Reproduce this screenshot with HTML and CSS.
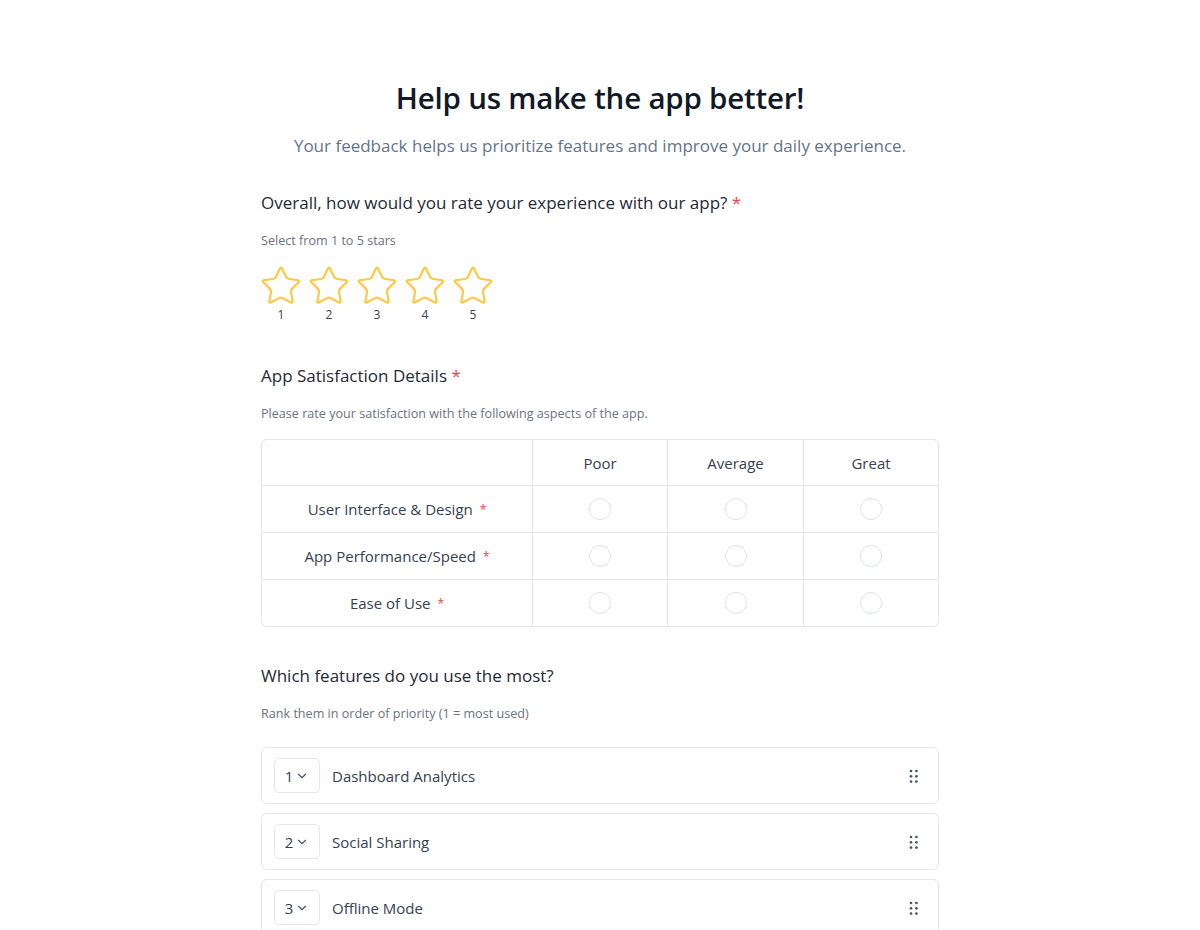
FILE: index.html
```html
<!DOCTYPE html>
<html lang="en">
<head>
<meta charset="utf-8">
<title>Feedback</title>
<link rel="stylesheet" href="styles.css">
</head>
<body>
<main class="form">
  <h1 class="title">Help us make the app better!</h1>
  <p class="subtitle">Your feedback helps us prioritize features and improve your daily experience.</p>

  <section class="question q-rating">
    <h2 class="q-title">Overall, how would you rate your experience with our app? <span class="req">*</span></h2>
    <p class="q-help">Select from 1 to 5 stars</p>
    <div class="stars">
      <div class="star"><svg viewBox="0 0 24 24" class="star-icon"><path d="M11.5 2.3a.53.53 0 0 1 .95 0l2.31 4.68a2.12 2.12 0 0 0 1.6 1.16l5.16.75a.53.53 0 0 1 .3.9l-3.74 3.64a2.12 2.12 0 0 0-.61 1.88l.88 5.14a.53.53 0 0 1-.77.56l-4.62-2.43a2.12 2.12 0 0 0-1.97 0L6.4 21.01a.53.53 0 0 1-.77-.56l.88-5.14a2.12 2.12 0 0 0-.61-1.88L2.16 9.8a.53.53 0 0 1 .29-.9l5.17-.76a2.12 2.12 0 0 0 1.6-1.16z"/></svg><span class="star-num">1</span></div>
      <div class="star"><svg viewBox="0 0 24 24" class="star-icon"><path d="M11.5 2.3a.53.53 0 0 1 .95 0l2.31 4.68a2.12 2.12 0 0 0 1.6 1.16l5.16.75a.53.53 0 0 1 .3.9l-3.74 3.64a2.12 2.12 0 0 0-.61 1.88l.88 5.14a.53.53 0 0 1-.77.56l-4.62-2.43a2.12 2.12 0 0 0-1.97 0L6.4 21.01a.53.53 0 0 1-.77-.56l.88-5.14a2.12 2.12 0 0 0-.61-1.88L2.16 9.8a.53.53 0 0 1 .29-.9l5.17-.76a2.12 2.12 0 0 0 1.6-1.16z"/></svg><span class="star-num">2</span></div>
      <div class="star"><svg viewBox="0 0 24 24" class="star-icon"><path d="M11.5 2.3a.53.53 0 0 1 .95 0l2.31 4.68a2.12 2.12 0 0 0 1.6 1.16l5.16.75a.53.53 0 0 1 .3.9l-3.74 3.64a2.12 2.12 0 0 0-.61 1.88l.88 5.14a.53.53 0 0 1-.77.56l-4.62-2.43a2.12 2.12 0 0 0-1.97 0L6.4 21.01a.53.53 0 0 1-.77-.56l.88-5.14a2.12 2.12 0 0 0-.61-1.88L2.16 9.8a.53.53 0 0 1 .29-.9l5.17-.76a2.12 2.12 0 0 0 1.6-1.16z"/></svg><span class="star-num">3</span></div>
      <div class="star"><svg viewBox="0 0 24 24" class="star-icon"><path d="M11.5 2.3a.53.53 0 0 1 .95 0l2.31 4.68a2.12 2.12 0 0 0 1.6 1.16l5.16.75a.53.53 0 0 1 .3.9l-3.74 3.64a2.12 2.12 0 0 0-.61 1.88l.88 5.14a.53.53 0 0 1-.77.56l-4.62-2.43a2.12 2.12 0 0 0-1.97 0L6.4 21.01a.53.53 0 0 1-.77-.56l.88-5.14a2.12 2.12 0 0 0-.61-1.88L2.16 9.8a.53.53 0 0 1 .29-.9l5.17-.76a2.12 2.12 0 0 0 1.6-1.16z"/></svg><span class="star-num">4</span></div>
      <div class="star"><svg viewBox="0 0 24 24" class="star-icon"><path d="M11.5 2.3a.53.53 0 0 1 .95 0l2.31 4.68a2.12 2.12 0 0 0 1.6 1.16l5.16.75a.53.53 0 0 1 .3.9l-3.74 3.64a2.12 2.12 0 0 0-.61 1.88l.88 5.14a.53.53 0 0 1-.77.56l-4.62-2.43a2.12 2.12 0 0 0-1.97 0L6.4 21.01a.53.53 0 0 1-.77-.56l.88-5.14a2.12 2.12 0 0 0-.61-1.88L2.16 9.8a.53.53 0 0 1 .29-.9l5.17-.76a2.12 2.12 0 0 0 1.6-1.16z"/></svg><span class="star-num">5</span></div>
    </div>
  </section>

  <section class="question q-matrix">
    <h2 class="q-title">App Satisfaction Details <span class="req">*</span></h2>
    <p class="q-help">Please rate your satisfaction with the following aspects of the app.</p>
    <div class="matrix">
      <div class="m-row m-head">
        <div class="m-cell m-label"></div>
        <div class="m-cell">Poor</div>
        <div class="m-cell">Average</div>
        <div class="m-cell">Great</div>
      </div>
      <div class="m-row">
        <div class="m-cell m-label">User Interface &amp; Design<span class="req req-sm">*</span></div>
        <div class="m-cell"><span class="radio"></span></div>
        <div class="m-cell"><span class="radio"></span></div>
        <div class="m-cell"><span class="radio"></span></div>
      </div>
      <div class="m-row">
        <div class="m-cell m-label">App Performance/Speed<span class="req req-sm">*</span></div>
        <div class="m-cell"><span class="radio"></span></div>
        <div class="m-cell"><span class="radio"></span></div>
        <div class="m-cell"><span class="radio"></span></div>
      </div>
      <div class="m-row">
        <div class="m-cell m-label">Ease of Use<span class="req req-sm">*</span></div>
        <div class="m-cell"><span class="radio"></span></div>
        <div class="m-cell"><span class="radio"></span></div>
        <div class="m-cell"><span class="radio"></span></div>
      </div>
    </div>
  </section>

  <section class="question q-rank">
    <h2 class="q-title">Which features do you use the most?</h2>
    <p class="q-help">Rank them in order of priority (1 = most used)</p>
    <div class="rank-list">
      <div class="rank-item">
        <div class="rank-select"><span>1</span><svg class="chev" viewBox="0 0 24 24"><path d="m6 9 6 6 6-6"/></svg></div>
        <span class="rank-label">Dashboard Analytics</span>
        <svg class="grip" viewBox="0 0 10 14"><circle cx="2" cy="2" r="1.35"/><circle cx="7.4" cy="2" r="1.35"/><circle cx="2" cy="7.3" r="1.35"/><circle cx="7.4" cy="7.3" r="1.35"/><circle cx="2" cy="12.6" r="1.35"/><circle cx="7.4" cy="12.6" r="1.35"/></svg>
      </div>
      <div class="rank-item">
        <div class="rank-select"><span>2</span><svg class="chev" viewBox="0 0 24 24"><path d="m6 9 6 6 6-6"/></svg></div>
        <span class="rank-label">Social Sharing</span>
        <svg class="grip" viewBox="0 0 10 14"><circle cx="2" cy="2" r="1.35"/><circle cx="7.4" cy="2" r="1.35"/><circle cx="2" cy="7.3" r="1.35"/><circle cx="7.4" cy="7.3" r="1.35"/><circle cx="2" cy="12.6" r="1.35"/><circle cx="7.4" cy="12.6" r="1.35"/></svg>
      </div>
      <div class="rank-item">
        <div class="rank-select"><span>3</span><svg class="chev" viewBox="0 0 24 24"><path d="m6 9 6 6 6-6"/></svg></div>
        <span class="rank-label">Offline Mode</span>
        <svg class="grip" viewBox="0 0 10 14"><circle cx="2" cy="2" r="1.35"/><circle cx="7.4" cy="2" r="1.35"/><circle cx="2" cy="7.3" r="1.35"/><circle cx="7.4" cy="7.3" r="1.35"/><circle cx="2" cy="12.6" r="1.35"/><circle cx="7.4" cy="12.6" r="1.35"/></svg>
      </div>
    </div>
  </section>
</main>
</body>
</html>
```

FILE: styles.css
```css
* { box-sizing: border-box; }
html, body { margin: 0; padding: 0; background: #ffffff; }
body {
  font-family: "Open Sans", "Noto Sans", sans-serif;
  color: #1f2937;
  overflow: hidden;
  height: 930px;
}
.form {
  width: 678px;
  margin: 0 auto;
  padding-top: 78px;
}
.title {
  margin: 0;
  text-align: center;
  font-size: 29.5px;
  line-height: 40px;
  font-weight: 600;
  color: #111827;
  letter-spacing: -0.2px;
}
.subtitle {
  margin: 16px 0 0;
  text-align: center;
  font-size: 17px;
  line-height: 24px;
  color: #64748b;
}
.question { margin: 0; }
.q-rating { margin-top: 33px; }
.q-matrix { margin-top: 42px; }
.q-rank { margin-top: 37px; }
.q-title {
  margin: 0;
  font-size: 17px;
  line-height: 24px;
  font-weight: 500;
  color: #1f2937;
}
.req { color: #ef4444; }
.req-sm { font-size: 12px; margin-left: 7px; }
.q-help {
  margin: 17px 0 0;
  font-size: 12.6px;
  line-height: 18px;
  color: #6b7280;
}
.stars {
  display: flex;
  gap: 4px;
  margin-top: 14px;
  margin-left: -2px;
}
.star {
  display: flex;
  flex-direction: column;
  align-items: center;
  width: 44px;
}
.star-icon {
  width: 44px;
  height: 44px;
  fill: none;
  stroke: #fbc840;
  stroke-width: 1.15;
  stroke-linejoin: round;
}
.star-num {
  font-size: 12px;
  line-height: 14px;
  color: #374151;
}
.matrix {
  margin-top: 16px;
  border: 1px solid #e5e7eb;
  border-radius: 6px;
  overflow: hidden;
}
.m-row {
  display: grid;
  grid-template-columns: 270px 135px 136px 1fr;
  height: 47px;
  border-top: 1px solid #e5e7eb;
}
.m-row.m-head { border-top: none; height: 45px; }
.m-cell {
  display: flex;
  align-items: center;
  justify-content: center;
  border-left: 1px solid #e5e7eb;
  font-size: 15px;
  color: #374151;
}
.m-cell:first-child { border-left: none; }
.m-label { color: #374151; }
.radio {
  width: 22px;
  height: 22px;
  border-radius: 50%;
  border: 1px solid #dde1e6;
  background: #fff;
}
.rank-list {
  margin-top: 24px;
  display: flex;
  flex-direction: column;
  gap: 9px;
}
.rank-item {
  display: flex;
  align-items: center;
  height: 57px;
  padding: 0 16px 0 12px;
  border: 1px solid #e5e7eb;
  border-radius: 6px;
  background: #fff;
}
.rank-select {
  width: 46px;
  height: 35px;
  border: 1px solid #e5e7eb;
  border-radius: 5px;
  display: flex;
  align-items: center;
  justify-content: center;
  gap: 2px;
  font-size: 15px;
  color: #374151;
}
.chev {
  width: 14px;
  height: 14px;
  fill: none;
  stroke: #4b5563;
  stroke-width: 2;
  stroke-linecap: round;
  stroke-linejoin: round;
}
.rank-label {
  margin-left: 12px;
  flex: 1;
  font-size: 15px;
  color: #374151;
}
.grip {
  width: 10px;
  height: 14px;
  fill: #4b5563;
  margin-right: 3px;
}
```
